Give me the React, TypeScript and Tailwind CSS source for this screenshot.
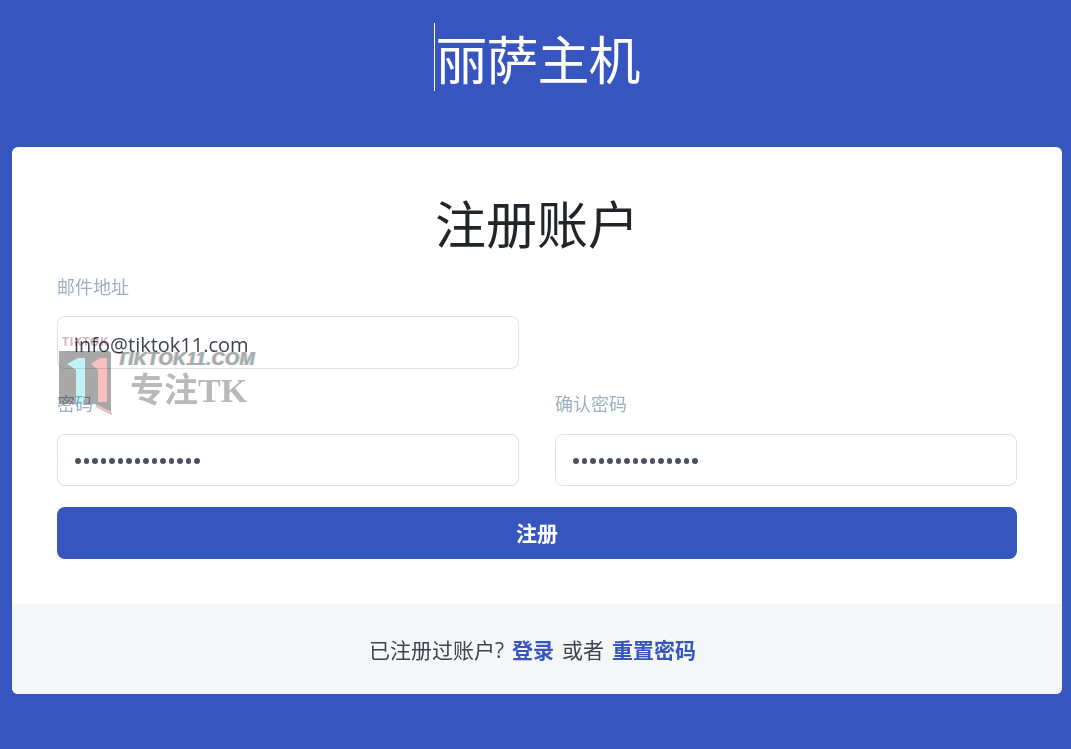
const fontStack = "font-['Open_Sans','Noto_Sans_CJK_SC',sans-serif]";

const Field = ({ label, value, password, tall }: { label: string; value: string; password?: boolean; tall?: boolean }) => (
  <div className="flex flex-col">
    <label className={`text-[18px] leading-[24px] text-[#a0aec0] ${tall ? "h-[29px]" : "h-[30px]"}`}>{label}</label>
    <div
      className={`mt-[12px] flex items-center rounded-[8px] border border-[#dfe1e5] bg-white px-4 text-[20px] text-[#3d4451] ${
        tall ? "h-[53px]" : "h-[52px]"
      }`}
    >
      {password ? (
        <span className="flex gap-[3px] pl-[1px] pt-[1px]">
          {Array.from({ length: 15 }).map((_, k) => (
            <span key={k} className="h-[6px] w-[5.5px] rounded-full bg-[#4a5260]" />
          ))}
        </span>
      ) : (
        <span className="pt-[4px]">{value}</span>
      )}
    </div>
  </div>
);

const Watermark = () => (
  <div className="pointer-events-none absolute left-[58px] top-[334px] h-[84px] w-[210px] select-none mix-blend-multiply">
    <span className="absolute left-[4px] top-0 text-[12px] font-bold leading-[16px] tracking-[0.5px] text-[#d9b4b4]">TIKTOK</span>
    <svg className="absolute left-0 top-[14px]" width="56" height="68" viewBox="0 0 56 68">
      <path d="M1 3 H50 Q53 3 53 6 V64 L37 56 L3 56 Q1 56 1 54 Z" fill="#a8a8a8" />
      <path d="M9 16 L20 10 H27 V56 H18 V22 Z" fill="#bff3f5" />
      <path d="M33 16 L42 10 H49 V54 H40 V22 Z" fill="#f6c0c0" />
      <path d="M38 58 L54 66" stroke="#f3b5b5" strokeWidth="2" />
    </svg>
    <span className="absolute left-[59px] top-[12px] font-['Liberation_Sans',sans-serif] text-[18px] font-bold italic leading-[26px] tracking-[0.5px] text-[#a9a9a9] [text-shadow:1px_0_#a5eef2,-1px_0_#f3b5b5]">
      TIKTOK11.COM
    </span>
    <span className="absolute left-[72px] top-[37px] font-['Liberation_Serif','Noto_Sans_CJK_SC',serif] text-[34px] font-bold leading-[40px] text-[#b9b9b9]">
      专注TK
    </span>
  </div>
);

export default function App() {
  return (
    <div className={`${fontStack} relative h-[749px] overflow-hidden bg-[#3655bf]`}>
      <header className="flex h-[147px] justify-center pt-[23px]">
        <h1 className="ml-[3px] h-[68px] border-l border-white text-[52px] font-normal leading-[73px] tracking-[-1px] text-white">
          丽萨主机
        </h1>
      </header>

      <main className="mx-[12px] flex h-[547px] w-[1050px] flex-col overflow-hidden rounded-[6px] bg-white">
        <div className="flex-1 px-[45px]">
          <h2 className="mt-[43px] h-[85px] text-center text-[51px] font-normal leading-[69px] text-[#212529]">
            注册账户
          </h2>
          <div className="flex flex-col gap-[23px]">
            <div className="grid grid-cols-2 gap-x-[36px]">
              <Field label="邮件地址" value="info@tiktok11.com" tall />
            </div>
            <div className="grid grid-cols-2 gap-x-[36px]">
              <Field label="密码" value="" password />
              <Field label="确认密码" value="" password />
            </div>
          </div>
          <button className="mt-[21px] h-[52px] w-full rounded-[8px] bg-[#3655bf] pt-[2px] text-[21px] font-bold text-white">
            注册
          </button>
        </div>
        <footer className="flex h-[90px] items-center justify-center gap-[8px] bg-[#f5f6f8] pr-[9px] pt-[4px] text-[21px] text-[#3d4451]">
          <span>已注册过账户?</span>
          <a className="font-bold text-[#3655bf]">登录</a>
          <span>或者</span>
          <a className="font-bold text-[#3655bf]">重置密码</a>
        </footer>
      </main>

      <Watermark />
    </div>
  );
}
